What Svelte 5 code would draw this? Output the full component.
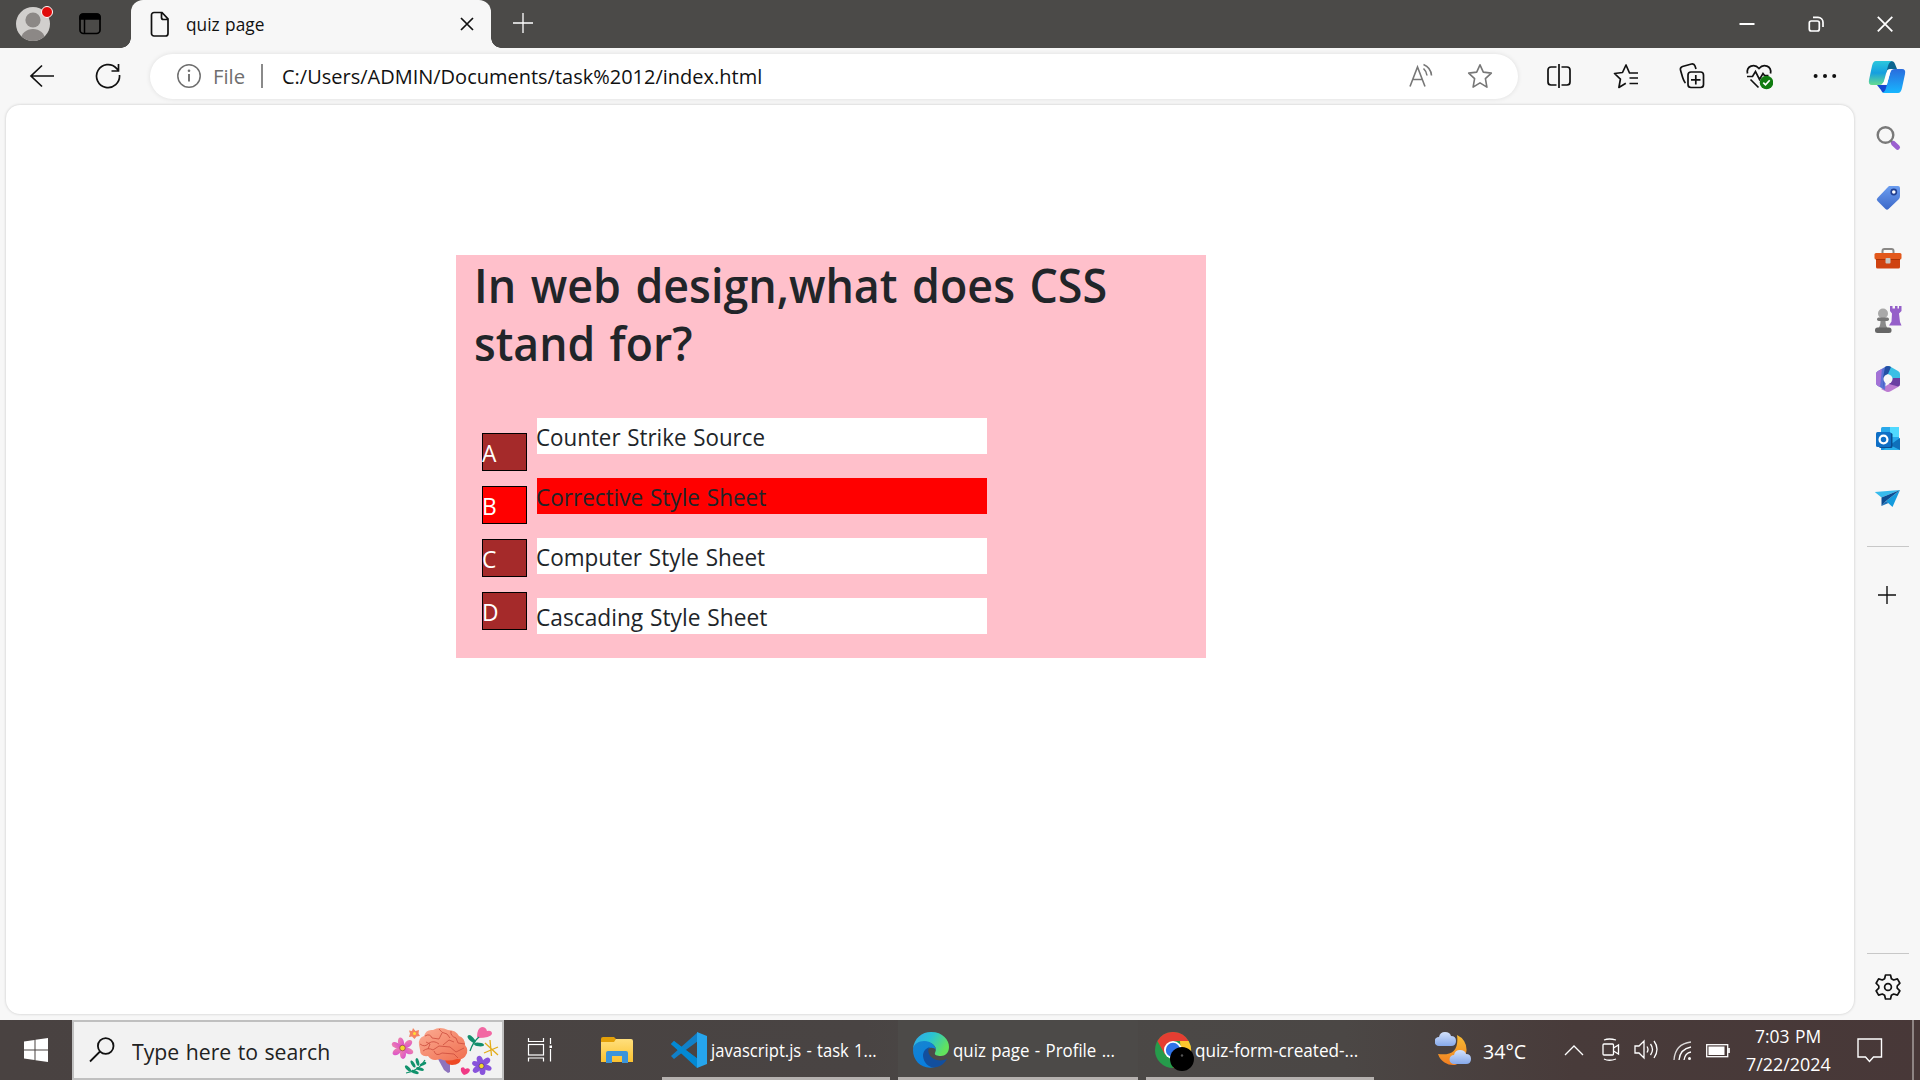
<script>
  const options = [
    { key: 'A', label: 'Counter Strike Source', width: 229 },
    { key: 'B', label: 'Corrective Style Sheet', width: 230, wrong: true },
    { key: 'C', label: 'Computer Style Sheet', width: 229 },
    { key: 'D', label: 'Cascading Style Sheet', width: 231 }
  ];

  // Condenses a line of text horizontally so that it takes the given width.
  function fit(node, width) {
    node.style.transform = `scaleX(${width / node.offsetWidth})`;
  }
</script>

<div class="screen">
  <header class="tabs">
    <div class="avatar">
      <svg width="40" height="44" viewBox="0 0 40 44">
        <defs><clipPath id="face"><circle cx="20" cy="24" r="17" /></clipPath></defs>
        <circle cx="20" cy="24" r="17" fill="#d1cfcd" />
        <g clip-path="url(#face)" fill="#8c8886"><circle cx="20" cy="20" r="7.6" /><ellipse cx="20" cy="39.5" rx="12" ry="10.5" /></g>
        <circle cx="34" cy="12" r="5.5" fill="#e00b0b" stroke="#fff" stroke-width="1" />
      </svg>
    </div>
    <svg class="spaces" width="24" height="24" viewBox="0 0 24 24"><rect x="2" y="2" width="20" height="19.5" rx="3.5" fill="none" stroke="#000" stroke-width="1.7" /><path d="M2 7V5a3 3 0 0 1 3-3h14a3 3 0 0 1 3 3v2zM6.5 7v14" stroke="#000" stroke-width="1.5" /></svg>
    <div class="tab">
      <svg width="20" height="26" viewBox="0 0 20 26" fill="none" stroke="#111" stroke-width="1.7"><path d="M4 1.5h8l6 6.3v14.7a2.5 2.5 0 0 1-2.5 2.5H4a2.5 2.5 0 0 1-2.5-2.5V4A2.5 2.5 0 0 1 4 1.5zM11.5 1.5v5a2 2 0 0 0 2 2H18" /></svg>
      <div class="title"><span use:fit={78}>quiz page</span></div>
      <svg width="16" height="16" viewBox="0 0 16 16" stroke="#111" stroke-width="1.7"><path d="M2 2l12 12M14 2L2 14" /></svg>
    </div>
    <svg class="newtab" width="22" height="22" viewBox="0 0 22 22" stroke="#fff" stroke-width="1.3"><path d="M1 11h20M11 1v20" /></svg>
    <div class="window">
      <svg width="16" height="16" viewBox="0 0 16 16" stroke="#fff" stroke-width="2"><path d="M.5 8h15" /></svg>
      <svg width="16" height="16" viewBox="0 0 16 16" fill="none" stroke="#fff" stroke-width="1.7"><rect x="1.3" y="5" width="10" height="10" rx="2" /><path d="M5 1.3h5a5 5 0 0 1 5 5V11" /></svg>
      <svg width="16" height="16" viewBox="0 0 16 16" stroke="#fff" stroke-width="1.8"><path d="M.8.8l14.5 14.5M15.3.8L.8 15.3" /></svg>
    </div>
  </header>

  <div class="toolbar">
    <svg class="back" width="26" height="26" viewBox="0 0 26 26" fill="none" stroke="#111" stroke-width="1.7"><path d="M25 13H2M13 2.500L2 13l11 10.500" /></svg>
    <svg class="reload" width="26" height="26" viewBox="0 0 26 26" fill="none" stroke="#111" stroke-width="1.7"><path d="M24.500 12A11.500 11.500 0 1 1 21.500 5.300L23.500 7.500M23.500 1v7h-7" /></svg>
    <div class="address">
      <svg width="26" height="26" viewBox="0 0 26 26" fill="none" stroke="#6f6f6f" stroke-width="1.5"><circle cx="13" cy="13" r="11.2" /><path d="M13 11v7.500" stroke-width="1.9" /><circle cx="13" cy="7.7" r="1.3" fill="#6f6f6f" stroke="none" /></svg>
      <div class="scheme"><span use:fit={32}>File</span></div>
      <i></i>
      <div class="url"><span use:fit={480}>C:/Users/ADMIN/Documents/task%2012/index.html</span></div>
      <svg class="read" width="26" height="26" viewBox="0 0 26 26" fill="none" stroke="#777" stroke-width="1.6"><path d="M2 23.500L9.500 4 17 23.500M5 16.500h9M15.500 5.500a11 11 0 0 1 3.500 7M15.500 1.500a13 13 0 0 1 8 11" /></svg>
      <svg width="26" height="26" viewBox="0 0 26 26" fill="none" stroke="#777" stroke-width="1.6" stroke-linejoin="round"><path d="M13 1.800l3.300 7.300 8 1-5.900 5.600 1.500 8.400-6.900-4.200-6.900 4.200 1.500-8.400-5.900-5.600 8-1z" /></svg>
    </div>
    <div class="actions">
      <svg width="28" height="28" viewBox="0 0 28 28" fill="none" stroke="#111" stroke-width="1.7"><path d="M11.500 5H6a3 3 0 0 0-3 3v12a3 3 0 0 0 3 3h5.500M16.500 5H22a3 3 0 0 1 3 3v12a3 3 0 0 1-3 3h-5.500M14 2v24" /></svg>
      <svg width="28" height="28" viewBox="0 0 28 28" fill="none" stroke="#111" stroke-width="1.7" stroke-linejoin="round"><path d="M26 11H17.500L14 3l-3.500 7.500-8 1 5.900 5.600L6.900 25.500l6.900-4.300M17.500 16H26M17.500 21.500H26" /></svg>
      <svg width="28" height="28" viewBox="0 0 28 28" fill="none" stroke="#111" stroke-width="1.7"><rect x="10" y="10" width="15.5" height="15.5" rx="3" /><path d="M17.800 13v9.500M13 17.800h9.500M7.500 21C5 19 4 13 2.500 8a3 3 0 0 1 2-3.500l9-2.500a3 3 0 0 1 3.500 2l1 3" /></svg>
      <svg width="28" height="28" viewBox="0 0 28 28" fill="none" stroke="#111" stroke-width="1.7"><path d="M2.500 11.500C1 4 9.500 1 14 6.500 18.500 1 27 4 25.500 11.500M2 14.500h5.500l3-5 4 8 3.500-6 1.500 2h4M5.500 17.500l8 8" /><circle cx="21.5" cy="20.5" r="6.8" fill="#107c10" stroke="none" /><path d="M18.300 20.600l2.200 2.200 4.200-4.600" stroke="#fff" /></svg>
      <svg width="28" height="28" viewBox="0 0 28 28" fill="#111"><circle cx="4.6" cy="14" r="2" /><circle cx="14" cy="14" r="2" /><circle cx="23.2" cy="14" r="2" /></svg>
    </div>
    <svg class="copilot" width="38" height="34" viewBox="0 0 38 34">
      <defs>
        <linearGradient id="ca" x2="0" y2="1"><stop stop-color="#2bc7dc" /><stop offset=".5" stop-color="#159fe0" /><stop offset="1" stop-color="#66dc90" /></linearGradient>
        <linearGradient id="cb" x2="0" y2="1"><stop stop-color="#2a6cdd" /><stop offset="1" stop-color="#17b6ff" /></linearGradient>
      </defs>
      <path d="M18 1h5q3 0 4 3l2 5h-7q-3 0-4 4z" fill="#0b648f" />
      <path d="M9 25l4 5q1 3 4 3h5l4-8z" fill="#1548d0" />
      <path d="M8 1h16q-3 1-4 5l-4 15q-1 4-5 4H4q-4 0-3-5L4 6q1-5 4-5z" fill="url(#ca)" />
      <path d="M30 33H14q3-1 4-5l4-15q1-4 5-4h7q4 0 3 5l-3 14q-1 5-4 5z" fill="url(#cb)" />
      <path d="M20 10h3l-4 14h-5q2-1 3-5z" fill="#fff" />
    </svg>
  </div>

  <div class="body">
    <main class="page">
      <section class="quiz">
        <h1><span use:fit={633}>In web design,what does CSS</span><span use:fit={218}>stand for?</span></h1>
        <div class="answers">
          <div class="keys">
            {#each options as o}<div class="key" class:wrong={o.wrong}><span>{o.key}</span></div>{/each}
          </div>
          <div class="labels">
            {#each options as o}<div class="label" class:wrong={o.wrong}><span use:fit={o.width}>{o.label}</span></div>{/each}
          </div>
        </div>
      </section>
    </main>

    <aside class="side">
      <svg viewBox="0 0 28 28"><circle cx="11.5" cy="11" r="7.8" fill="none" stroke="#797979" stroke-width="2.4" /><path d="M17 17l3 3" stroke="#777" stroke-width="2.5" /><path d="M19.500 19.500l4 3.800" stroke="#9b5fd0" stroke-width="5" stroke-linecap="round" /></svg>
      <svg viewBox="0 0 28 28"><defs><linearGradient id="tg" x2="0" y2="1"><stop stop-color="#6b9df0" /><stop offset="1" stop-color="#3c68c8" /></linearGradient></defs><path d="M15 2h9q2 0 2 2v8q0 2-1.500 3.500L14.500 25q-1.500 1.500-3 0l-8-8q-1.500-1.500 0-3L13 4z" fill="url(#tg)" /><circle cx="19.8" cy="8" r="2.6" fill="#fff" stroke="#213f91" stroke-width="1.6" /></svg>
      <svg viewBox="0 0 28 28"><path d="M8.500 9V7q0-2 2-2h7q2 0 2 2v2" fill="none" stroke="#8a8886" stroke-width="2" /><rect x="2" y="14" width="24" height="10.5" rx="1.5" fill="#cf4210" /><rect x=".5" y="9" width="27" height="6.5" rx="1.5" fill="#e2581c" /><path d="M2 15.500h24" stroke="#a73207" /><rect x="11.5" y="14" width="5" height="5.5" rx="1" fill="#c8c6c4" /></svg>
      <svg viewBox="0 0 28 28"><path d="M16 1h2.500v2.500H21V1h2.500v2.500H25V1h2.500v5l-2.500 2.500 1 8.500 1.500 3.500H15l2.500-4 .5-8-2-2.500z" fill="#955fc9" /><circle cx="9" cy="8.5" r="5" fill="#a9a9a9" /><rect x="3" y="12.5" width="12" height="3.5" rx="1.7" fill="#777" /><path d="M6.500 16h5q0 5 2 7h-9q2-2 2-7z" fill="#8a8a8a" /><rect x="1" y="22.5" width="16.5" height="5.5" rx="2.5" fill="#666" /></svg>
      <svg viewBox="0 0 28 28"><path d="M14 1q2 0 3 1l7 4q2 1 2 3v6l-8-1-4-5z" fill="#3abfe5" /><path d="M26 13v6q0 2-2 3l-7 4q-3 2-6 0l-4-2 8-5z" fill="#bb7bd1" /><path d="M26 13v6q0 2-2 2.500L15 19l4-6z" fill="#6b3fa2" /><path d="M14 1l-2 12-1 12-7-4q-2-1-2-3V9q0-2 2-3l7-4q1-1 3-1z" fill="#5b72d5" /><path d="M2 14V9q0-2 2-3l4-2-2 18-2-1q-2-1-2-3z" fill="#a472d6" /><path d="M11 2q3-2 6 0l-3 7-5 4 1 10q-1-3-1-10z" fill="#2350a4" /><circle cx="14" cy="14" r="4.5" fill="#f7f7f7" /></svg>
      <svg viewBox="0 0 28 28"><rect x="7" y="2" width="18" height="20" rx="1.5" fill="#28a8ea" /><path d="M16 2h9v10h-9z" fill="#50d9ff" /><path d="M26 13v12H7V17l8 4z" fill="#1490df" /><path d="M26 13l-10 7v5h10z" fill="#0f70ba" /><path d="M16 20l10 5H9z" fill="#28b0eb" /><rect x="5" y="8" width="13.5" height="15" rx="1.5" fill="#0a4e90" /><rect x="2" y="7" width="15" height="15" rx="1.5" fill="#0f6fc6" /><circle cx="9.5" cy="14.5" r="3.9" fill="none" stroke="#fff" stroke-width="2.3" /></svg>
      <svg viewBox="0 0 28 28"><path d="M.8 7L26 5 7.500 12.500z" fill="#37bbed" /><path d="M26 5L18.500 22 12 16z" fill="#159bdd" /><path d="M26 5L7.500 12.500V21L12 16z" fill="#0d4d91" /><path d="M7.500 21l4.500-5 2.500 2z" fill="#1a72b9" /></svg>
      <hr />
      <svg class="plus" viewBox="0 0 28 28" stroke="#111" stroke-width="1.4"><path d="M4 14h18M13 5v18" /></svg>
      <hr class="low" />
      <svg class="gear" viewBox="0 0 28 28" fill="none" stroke="#111" stroke-width="1.7" stroke-linejoin="round"><path d="M11.500 2h5l.9 3.700 2.300 1.300 3.700-1.100 2.500 4.300L23.200 13v2.200l2.700 2.600-2.500 4.300-3.700-1.100-2.300 1.300-.9 3.700h-5l-.9-3.700L8.300 21l-3.700 1.100-2.500-4.300 2.700-2.600V13l-2.700-2.800 2.500-4.300L8.300 7l2.300-1.300z" /><circle cx="14" cy="14" r="3.4" /></svg>
    </aside>
  </div>

  <footer class="taskbar">
    <div class="start"><svg width="24" height="24" viewBox="0 0 24 24" fill="#fff"><path d="M0 3.400L10.500 2v9.500H0zM11.500 1.800L24 0v11.500H11.500zM0 12.500h10.500V22L0 20.600zM11.500 12.500H24V24l-12.500-1.800z" /></svg></div>
    <div class="search">
      <svg width="26" height="26" viewBox="0 0 26 26" fill="none" stroke="#111" stroke-width="1.8"><circle cx="16.7" cy="9" r="7.8" /><path d="M11 14.500L1 24.500" /></svg>
      <div class="hint"><span use:fit={198}>Type here to search</span></div>
      <svg width="110" height="50" viewBox="0 0 110 50">
        <defs>
          <linearGradient id="br" x2="1" y2="1"><stop stop-color="#fbac93" /><stop offset="1" stop-color="#f06f50" /></linearGradient>
          <linearGradient id="fl" x2="1" y2="1"><stop stop-color="#f08aa8" /><stop offset="1" stop-color="#d94ad0" /></linearGradient>
        </defs>
        <path d="M47 34l6 11 4 3 2-1V34z" fill="#8d73bd" />
        <path d="M54 33q0 7 7 7 9 0 9-7z" fill="#ee4a24" />
        <path d="M28 20Q27 13 33 11 35 4 42 5 49 1 57 5 65 5 68 11 74 13 74 20 78 25 75 30 73 35 66 34 56 37 49 34 41 37 37 31 29 32 29 25z" fill="url(#br)" />
        <path d="M29 19q5 4 9-1 5-3 10 1M34 11q5-3 7 2l7 1 3-6M48 4q2 4 8 5l3 4M60 6q-1 5 5 7l2 5 7 1M32 26q5-4 10-1l6-4 11 1 6 5 8-4M43 26q2 6 8 2l12 1 4 4M52 20l6-5 5 2M35 17l4 2-2 5" fill="none" stroke="#cc4b3c" stroke-width=".8" />
        <g fill="url(#fl)">
          <ellipse cx="10" cy="17.500" rx="3" ry="5" transform="rotate(-12 10 17.500)" /><ellipse cx="17" cy="19" rx="3" ry="5" transform="rotate(48 17 19)" /><ellipse cx="17.500" cy="26" rx="3" ry="5" transform="rotate(112 17.500 26)" /><ellipse cx="12" cy="29" rx="3" ry="5" /><ellipse cx="6" cy="26.500" rx="3" ry="5" transform="rotate(55 6 26.500)" /><ellipse cx="5.500" cy="20.500" rx="2.800" ry="5" transform="rotate(-65 5.500 20.500)" />
        </g>
        <circle cx="11.500" cy="23" r="2.800" fill="#f1d82c" stroke="#8f374f" stroke-width=".7" />
        <path d="M22 3l2.500 3 3.500-1-.5 3.500L29 11l-3.500.5L23.500 14 21 11.500l-3 .5 1-3.500-1-3 3 .5z" fill="#f58461" /><circle cx="23.500" cy="8.500" r="1.500" fill="#ffdf35" />
        <path d="M15 48Q28 46 34 35" stroke="#10926c" stroke-width="1.200" fill="none" />
        <g fill="#10926c"><ellipse cx="17" cy="43.500" rx="4" ry="1.600" transform="rotate(45 17 43.500)" /><ellipse cx="22" cy="39" rx="4" ry="1.600" transform="rotate(60 22 39)" /><ellipse cx="26.500" cy="37" rx="4" ry="1.600" transform="rotate(75 26.500 37)" /><ellipse cx="24" cy="47" rx="4" ry="1.600" transform="rotate(20 24 47)" /><ellipse cx="29" cy="44" rx="4" ry="1.600" transform="rotate(15 29 44)" /><ellipse cx="32" cy="39" rx="3.500" ry="1.500" transform="rotate(-25 32 39)" /></g>
        <path d="M86 12q0-9 5-10 4 0 5 4 5-1 5 3-2 4-14 4z" fill="#f268a3" />
        <path d="M88 12Q82 17 79 26" stroke="#128e6b" stroke-width="1.300" fill="none" /><ellipse cx="80.500" cy="14" rx="5" ry="2.200" transform="rotate(45 80.500 14)" fill="#128e6b" /><ellipse cx="88" cy="19.500" rx="5" ry="1.800" transform="rotate(5 88 19.500)" fill="#128e6b" />
        <path d="M99 15l1.500 16M93 28l14-6M94 18l13 12" stroke="#e3ac18" stroke-width="1.300" />
        <g fill="#8853db">
          <ellipse cx="89" cy="35.500" rx="3" ry="4.800" transform="rotate(-20 89 35.500)" /><ellipse cx="95" cy="36.500" rx="3" ry="4.800" transform="rotate(50 95 36.500)" /><ellipse cx="96" cy="42.500" rx="2.800" ry="4.800" transform="rotate(112 96 42.500)" /><ellipse cx="91.500" cy="45.500" rx="3" ry="4.500" /><ellipse cx="86" cy="44" rx="3" ry="4.800" transform="rotate(50 86 44)" /><ellipse cx="85.500" cy="39" rx="2.600" ry="4.600" transform="rotate(-70 85.500 39)" />
        </g>
        <circle cx="90.500" cy="41" r="2.600" fill="#f3d82b" stroke="#4c2e8b" stroke-width=".7" />
        <path d="M70 43q3-2 4 1 4-2 5 1-1 4-6 5-4-3-3-7z" fill="#f03a85" />
      </svg>
    </div>
    <svg class="taskview" width="26" height="26" viewBox="0 0 26 26" fill="none" stroke="#fff" stroke-width="1.2"><path d="M1.500 1v3.500h15V1M1.500 24.500V21h15v3.500M23.500 1v6M23.500 12v12.500" /><rect x="1.5" y="7.5" width="15" height="10.5" /><rect x="22.5" y="8.5" width="2.5" height="2.5" fill="#fff" stroke="none" /></svg>
    <svg class="folder" width="32" height="28" viewBox="0 0 32 28"><defs><linearGradient id="fo" x2="0" y2="1"><stop stop-color="#ffdf7d" /><stop offset="1" stop-color="#fbc22f" /></linearGradient></defs><path d="M0 3q0-2 2-2h11l2 2v6H0z" fill="#e3a008" /><path d="M0 6h13l2-3h15q2 0 2 2v21H0z" fill="url(#fo)" /><path d="M5 27V17q0-2 2-2h18q2 0 2 2v10h-6v-7H11v7z" fill="#3b94da" /></svg>
    <div class="app code">
      <svg width="36" height="36" viewBox="0 0 36 36"><path d="M0 12l3-3 5 4 19 14v8z" fill="#0a83cc" /><path d="M0 24l3 3 5-4 19-14V0z" fill="#1180c8" /><path d="M0 12l3-3 25 19-2 8z" fill="#0389d3" /><path d="M26 0l10 4v28l-10 4V0z" fill="#26a5ed" /></svg>
      <div><span use:fit={166}>javascript.js - task 1...</span></div>
    </div>
    <div class="app edge">
      <svg width="36" height="36" viewBox="0 0 36 36">
        <defs><linearGradient id="e1" x2="1" y2=".45"><stop stop-color="#31a5ef" /><stop offset=".5" stop-color="#2ac3d2" /><stop offset="1" stop-color="#62e35d" /></linearGradient><linearGradient id="e2" x2=".4" y2="1"><stop stop-color="#1785cf" /><stop offset="1" stop-color="#087edf" /></linearGradient></defs>
        <path d="M0 17C1 6 9 0 18 0c12 0 18 8 18 15 0 6-4 9-8 9-4 0-7-1-6-3 3-6-2-10-8-11C7 9 2 12 0 17z" fill="url(#e1)" />
        <path d="M0 18c0-6 6-9 11-9 7 0 12 5 12 9-2-4-12-3-11 6 1 6 5 10 10 11C10 38 0 30 0 18z" fill="url(#e2)" />
        <path d="M17 15c-4 1-7 4-7 9 1 8 7 13 14 11 4-1 8-4 10-8-7 3-15 1-18-5-1-3-1-5 1-7z" fill="#124f9e" />
      </svg>
      <div><span use:fit={162}>quiz page - Profile ...</span></div>
    </div>
    <div class="app chrome">
      <svg width="40" height="40" viewBox="0 0 40 40"><circle cx="18" cy="18" r="18" fill="#269b4b" /><path d="M2.400 9A18 18 0 0 1 33.600 9H18l-8 13.500z" fill="#e53e32" /><path d="M33.600 9A18 18 0 0 1 18 36l8-13.500L25 9z" fill="#fcc62d" /><circle cx="18" cy="18" r="9" fill="#fff" /><circle cx="18" cy="18" r="7.2" fill="#2e73e8" /><circle cx="27" cy="27" r="12" fill="#000" /><circle cx="27" cy="23.5" r="1.2" fill="#555" /></svg>
      <div><span use:fit={163}>quiz-form-created-...</span></div>
    </div>
    <div class="weather">
      <svg width="38" height="34" viewBox="0 0 38 34"><defs><linearGradient id="mo" x2="0" y2="1"><stop stop-color="#f7bd35" /><stop offset="1" stop-color="#f27d20" /></linearGradient><linearGradient id="cl" x2="0" y2="1"><stop stop-color="#d3e2fc" /><stop offset="1" stop-color="#86a9ea" /></linearGradient></defs><path d="M22 3a16 16 0 0 1-2 30A16 16 0 0 1 3 22Q25 25 22 3z" fill="url(#mo)" /><path d="M4 14a4.500 4.500 0 0 1 0-9q1-5 6-5 5 0 6 4 5 0 5 5 0 5-5 5z" fill="url(#cl)" /><path d="M19 32a4.500 4.500 0 0 1 0-9q1-5 6-5 5 0 6 4 5 0 5 5 0 5-5 5z" fill="url(#cl)" /></svg>
      <div><span use:fit={43}>34°C</span></div>
    </div>
    <div class="tray">
      <svg width="20" height="24" viewBox="0 0 20 24"><path d="M1 17l9-9 9 9" /></svg>
      <svg class="t2" width="18" height="24" viewBox="0 0 18 24"><rect x="1" y="6" width="10.5" height="11" rx="1" /><path d="M11.500 10l5-3v9l-5-3M2 2q5-2 12 0M2 21q5 2.500 12 0" /></svg>
      <svg class="t3" width="24" height="24" viewBox="0 0 24 24"><path d="M1 8h4l5-5v17l-5-5H1zM13 8.500q2 3 0 6M16.500 6q4 5.500 0 11M20 3q6 8 0 17" /></svg>
      <svg class="t4" width="20" height="24" viewBox="0 0 20 24"><path d="M1 22Q2 6 18 4" opacity=".8" /><path d="M6 22Q7 11 18 9M11 22q1-7 7-8" /><circle cx="16.5" cy="20.5" r="1.5" fill="#fff" stroke="none" /></svg>
      <svg class="t5" width="24" height="24" viewBox="0 0 24 24"><rect x=".7" y="5.7" width="21" height="12" /><rect x="2.5" y="7.5" width="16" height="8.5" fill="#fff" stroke="none" /><path d="M23 9v5" stroke-width="1.7" /></svg>
    </div>
    <div class="clock">
      <div><span use:fit={66}>7:03 PM</span></div>
      <div><span use:fit={85}>7/22/2024</span></div>
    </div>
    <svg class="note" width="26" height="26" viewBox="0 0 26 26" fill="none" stroke="#fff" stroke-width="1.4"><path d="M1 1h23.500v18h-8L12.500 23.500 8.500 19H1z" /></svg>
    <div class="peek"></div>
  </footer>
</div>

<style>
  :global(body) { margin: 0; overflow: hidden; }
  .screen { width: 1920px; height: 1080px; display: flex; flex-direction: column; background: #f7f7f7; font-family: "Open Sans", "Noto Sans", sans-serif; color: #111; overflow: hidden; }
  svg { flex: none; display: block; }
  span { display: inline-block; white-space: nowrap; transform-origin: 0 50%; word-spacing: 1px; }

  .tabs { height: 48px; flex: none; background: #4b4a48; display: flex; }
  .avatar { margin-left: 13px; width: 40px; }
  .spaces { margin: 12px 0 0 25px; }
  .tab { position: relative; width: 360px; height: 48px; margin-left: 28.500px; box-sizing: border-box; background: #f7f7f7; border-radius: 12px 12px 0 0; display: flex; align-items: center; padding: 0 16px 0 19px; }
  .tab::before, .tab::after { content: ""; position: absolute; bottom: 0; width: 10px; height: 10px; }
  .tab::before { left: -10px; background: radial-gradient(circle at 0 0, transparent 9.500px, #f7f7f7 10px); }
  .tab::after { right: -10px; background: radial-gradient(circle at 100% 0, transparent 9.500px, #f7f7f7 10px); }
  .title { flex: 1; font-size: 17.500px; margin-left: 16px; line-height: 24px; padding-bottom: 1px; }
  .newtab { margin: 12px 0 0 21px; }
  .window { margin: 15.500px 27px 0 auto; display: flex; gap: 53px; }

  .toolbar { height: 57px; flex: none; display: flex; align-items: center; box-sizing: border-box; padding-bottom: 1px; }
  .back { margin-left: 29px; }
  .reload { margin-left: 40px; }
  .address { width: 1368px; height: 45px; margin-left: 29px; border-radius: 23px; background: #fff; box-shadow: 0 0 5px #0000001a; display: flex; align-items: center; box-sizing: border-box; padding: 0 25px 0 26px; font-size: 20.300px; line-height: 30px; }
  .scheme { color: #6f6f6f; margin-left: 11px; width: 36px; }
  .address i { width: 1.500px; height: 24px; background: #8a8a8a; margin-left: 12px; }
  .url { margin-left: 19px; flex: 1; width: 0; }
  .read { margin-right: 33px; }
  .actions { display: flex; margin-left: 27px; gap: 38.500px; }
  .copilot { margin: 2px 0 0 29px; }

  .body { flex: 1; display: flex; min-height: 0; }
  .page { width: 1848px; height: 909px; margin-left: 6px; flex: none; background: #fff; border-radius: 14px; box-shadow: 0 0 3px #0003; display: flex; align-items: flex-start; }
  .quiz { margin: 150px 0 0 450px; width: 750px; height: 403px; background: pink; color: #212529; }
  h1 { margin: 0; padding: 2px 0 0 18px; height: 161px; font-size: 47px; line-height: 57.600px; font-weight: 600; }
  h1 span { display: block; width: max-content; word-spacing: 3px; }
  .answers { display: flex; font-size: 23.500px; }
  .keys { margin: 15px 10px 0 26px; display: flex; flex-direction: column; gap: 15px; }
  .key { width: 45px; height: 38px; box-sizing: border-box; border: 1px solid #000; background: brown; color: #fff; line-height: 38px; }
  .key span { transform: scaleX(.97); margin-left: -1px; }
  .labels { display: flex; flex-direction: column; gap: 24px; }
  .label { width: 450px; height: 36px; background: #fff; line-height: 38px; }
  .label span { margin-left: -.7px; }
  .wrong { background: red; }

  .side { width: 66px; display: flex; flex-direction: column; align-items: center; padding: 19px 0 0 1px; box-sizing: border-box; }
  .side svg { width: 28px; height: 28px; margin-bottom: 32.200px; }
  .side hr { width: 42px; height: 1px; border: 0; margin: 1px 0 34px; background: #c8c8c8; flex: none; }
  .side .plus { margin-bottom: 344px; }
  .side .low { margin: 0 0 19px; }
  .side .gear { margin: 0; }

  .taskbar { height: 60px; flex: none; display: flex; align-items: center; background: linear-gradient(90deg, #494241 0, #494443 45%, #4b4947 52%, #4b4745 70%, #483b3a 82%, #483838 100%); color: #fff; font-size: 17.700px; line-height: 28px; }
  .start { width: 72px; display: flex; justify-content: center; }
  .search { width: 432px; height: 60px; box-sizing: border-box; border: 2px solid #c0c0c0; background: #f2f2f2; color: #222; display: flex; align-items: center; padding-left: 15px; font-size: 22.300px; }
  .hint { margin: 4px 0 0 17px; width: 259px; }
  .taskview { margin-left: 23px; }
  .folder { margin: 0 29px 0 48px; }
  .app { height: 60px; box-sizing: border-box; border-bottom: 3px solid #b5b1af; display: flex; align-items: center; width: 228px; padding: 3px 0 0 9px; margin-right: 8px; }
  .app div { margin-left: 4px; width: 0; flex: 1; }
  .edge { width: 240px; padding-left: 15px; background: #4c4a48; }
  .chrome svg { margin: 4px -4px 0 0; }
  .weather { display: flex; align-items: center; margin-left: 53px; font-size: 20.500px; }
  .weather svg { margin-bottom: 3px; }
  .weather div { margin: 2px 0 0 10px; width: 44px; }
  .tray { display: flex; margin-left: 37px; fill: none; stroke: #fff; stroke-width: 1.3; }
  .t2 { margin-left: 18px; }
  .t3 { margin-left: 14px; }
  .t4 { margin-left: 15px; }
  .t5 { margin: 1px 0 0 13px; }
  .clock { width: 85px; margin-left: 16px; margin-top: 1px; height: 57px; line-height: 28px; }
  .clock div:first-child { padding-left: 9px; }
  .note { margin: 1px 0 0 26px; }
  .peek { margin-left: 29px; width: 1.500px; height: 60px; background: #8e8483; }
</style>
